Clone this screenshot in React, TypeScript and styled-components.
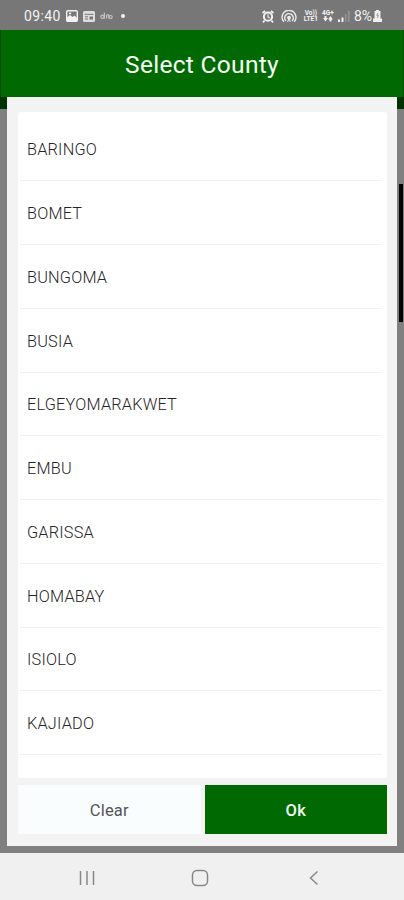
import React from "react";
import styled, { createGlobalStyle } from "styled-components";

const GlobalStyle = createGlobalStyle`
  * { box-sizing: border-box; }
  body { margin: 0; background: #808080; font-family: Roboto, "Liberation Sans", sans-serif; }
`;

const Screen = styled.div`
  display: flex;
  flex-direction: column;
  width: 404px;
  height: 900px;
  overflow: hidden;
  position: relative;
  background: #808080;
`;

const StatusBar = styled.div`
  display: flex;
  flex: none;
  align-items: center;
  justify-content: space-between;
  height: 30px;
  padding: 2px 22px 0 24px;
  background: #777777;
  color: #f2f2f2;
  font-size: 14px;
`;

const StatusGroup = styled.div<{ $gap: number }>`
  display: flex;
  align-items: center;
  gap: ${(p) => p.$gap}px;
  svg { display: block; flex: none; }
`;

const Clock = styled.span`
  letter-spacing: 0.35px;
`;

const Network = styled.span<{ $width: number }>`
  display: flex;
  flex-direction: column;
  align-items: center;
  width: ${(p) => p.$width}px;
  font-size: 6.5px;
  line-height: 6.5px;
  font-weight: 700;
  white-space: nowrap;
`;

const Header = styled.header`
  display: flex;
  flex: none;
  align-items: center;
  justify-content: center;
  height: 67px;
  padding-top: 1px;
  border-left: 1px solid #004f00;
  border-right: 1px solid #004f00;
  background: #016901;
  color: #f6fff6;
  font-size: 24.5px;
  letter-spacing: 0.3px;
`;

const Backdrop = styled.main`
  display: flex;
  flex: 1;
  min-height: 0;
  padding: 0 7px 7px;
  background: linear-gradient(#003300 0 12px, #808080 12px);
`;

const ScrollThumb = styled.div`
  position: absolute;
  top: 184px;
  right: 1px;
  width: 4px;
  height: 138px;
  background: #050505;
`;

const Dialog = styled.section`
  display: flex;
  flex: 1;
  flex-direction: column;
  gap: 7px;
  padding: 15px 10px 12px 11px;
  background: #f3f3f3;
`;

const List = styled.ul`
  flex: 1;
  min-height: 0;
  margin: 0;
  padding: 5.5px 5px 0 2px;
  overflow: hidden;
  list-style: none;
  border-radius: 3px;
  background: #ffffff;
`;

const Item = styled.li`
  display: flex;
  align-items: center;
  height: 63.75px;
  padding: 2px 0 0 7px;
  border-bottom: 1px solid #f0f0f0;
  color: #262626;
  font-size: 16.3px;
  font-weight: 300;
  letter-spacing: 0.2px;
`;

const Actions = styled.div`
  display: grid;
  grid-template-columns: 1fr 1fr;
  gap: 4px;
  flex: none;
  height: 49px;
`;

const Button = styled.button<{ $primary?: boolean }>`
  border: 0;
  padding: 1px 0 0;
  background: ${(p) => (p.$primary ? "#016901" : "#fafdfe")};
  color: ${(p) => (p.$primary ? "#f0fbf0" : "#555555")};
  font: ${(p) => (p.$primary ? 500 : 400)} 16.5px Roboto, sans-serif;
  letter-spacing: 0.15px;
`;

const NavBar = styled.nav`
  display: grid;
  grid-template-columns: 113px 113px 114px;
  justify-items: center;
  align-items: center;
  flex: none;
  height: 47px;
  padding: 3px 0 0 30.5px;
  background: #f0f0f0;
  svg { display: block; fill: none; stroke: #888888; stroke-width: 1.5; }
`;

const counties = [
  "BARINGO", "BOMET", "BUNGOMA", "BUSIA", "ELGEYOMARAKWET",
  "EMBU", "GARISSA", "HOMABAY", "ISIOLO", "KAJIADO",
];

const ImageIcon = () => (
  <svg width="12" height="12" viewBox="0 0 12 12">
    <rect x=".7" y=".7" width="10.6" height="10.6" rx="1" fill="none" stroke="#f2f2f2" strokeWidth="1.4" />
    <path d="M1 10V7.5L4 5l2.5 2L8.5 5.5 11 8v3H1z" fill="#f2f2f2" />
    <rect x="3" y="2.6" width="2.2" height="1.6" fill="#f2f2f2" />
  </svg>
);

const CardIcon = () => (
  <svg width="12" height="11" viewBox="0 0 12 11">
    <rect width="12" height="11" rx="1.5" fill="#dedede" />
    <path d="M1.5 3.3h9M2 5.8h3M2 8h3" stroke="#777" strokeWidth="1" />
    <rect x="6.5" y="5.5" width="3.5" height="3" fill="#777" />
  </svg>
);

const WaveIcon = () => (
  <svg width="13" height="8" viewBox="0 0 13 8" fill="none" stroke="#c2c2c2" strokeWidth="1.2">
    <circle cx="2.4" cy="4.8" r="1.6" />
    <path d="M4.4 .5v6.2M6.6 6.6V3.4q1.4-1.8 2.2 0v3.2" />
    <circle cx="10.7" cy="5" r="1.5" />
  </svg>
);

const AlarmIcon = () => (
  <svg width="12" height="13" viewBox="0 0 12 13">
    <path d="m.5 3 2.6-2M11.5 3 8.9 1M2.6 10.5 1 12.3M9.4 10.5l1.6 1.8" stroke="#f2f2f2" strokeWidth="1.8" />
    <circle cx="6" cy="6.7" r="4.1" fill="#777" stroke="#f2f2f2" strokeWidth="2" />
    <path d="M6 4.2v2.9l1.8.8" fill="none" stroke="#f2f2f2" strokeWidth="1.1" />
  </svg>
);

const HotspotIcon = () => (
  <svg width="16" height="13" viewBox="0 0 16 13" fill="none" stroke="#ececec" strokeWidth="1.4">
    <path d="M2.7 11.8a7 7 0 1 1 10.6 0M5 11a4.3 4.3 0 1 1 6 0" />
    <circle cx="8" cy="7.7" r="1.2" fill="#ececec" />
    <path d="m8 8-1.3 4M8 8l1.3 4" strokeWidth="1" />
  </svg>
);

const DataArrows = () => (
  <svg width="10" height="6" viewBox="0 0 10 6" fill="#f0f0f0">
    <path d="M0 2h1.5V0h2v2H5L2.5 5.5zM5 3.5 7.5 0 10 3.5H8.5v2h-2v-2z" />
  </svg>
);

const SignalIcon = () => (
  <svg width="12" height="12" viewBox="0 0 12 12">
    <path d="M0 12V9.5h2V12zM3.5 12V7.5h2V12z" fill="#f0f0f0" />
    <path d="M7 12V4h1.5v8zM10 12V1h1.6v11z" fill="#949494" />
  </svg>
);

const BatteryIcon = () => (
  <svg width="9" height="12" viewBox="0 0 9 12">
    <path d="M3 0h3v1h1.5v7.5H9V12H0V8.5h1.5V1H3z" fill="#eeeeee" />
    <path d="M5 3 3.8 5.3h1.7L4.3 8" fill="none" stroke="#888" strokeWidth=".8" />
  </svg>
);

const Dot = styled.span`
  width: 4px;
  height: 4px;
  margin-left: 3px;
  border-radius: 50%;
  background: #f2f2f2;
`;

export default function App() {
  return (
    <>
      <GlobalStyle />
      <Screen>
        <StatusBar>
          <StatusGroup $gap={5}>
            <Clock>09:40</Clock>
            <ImageIcon />
            <CardIcon />
            <WaveIcon />
            <Dot />
          </StatusGroup>
          <StatusGroup $gap={4}>
            <StatusGroup $gap={7}>
              <AlarmIcon />
              <HotspotIcon />
              <Network $width={14}><span>Vo))</span><span>LTE1</span></Network>
            </StatusGroup>
            <Network $width={12}><span>4G+</span><DataArrows /></Network>
            <SignalIcon />
            <StatusGroup $gap={1}>
              <span>8%</span>
              <BatteryIcon />
            </StatusGroup>
          </StatusGroup>
        </StatusBar>
        <Header>Select County</Header>
        <Backdrop>
          <Dialog>
            <List>
              {counties.map((name) => <Item key={name}>{name}</Item>)}
            </List>
            <Actions>
              <Button>Clear</Button>
              <Button $primary>Ok</Button>
            </Actions>
          </Dialog>
        </Backdrop>
        <ScrollThumb />
        <NavBar>
          <svg width="18" height="16" viewBox="0 0 18 16"><path d="M2.5 1v14M9 1v14M15.5 1v14" /></svg>
          <svg width="18" height="18" viewBox="0 0 18 18"><rect x="1.5" y="1.5" width="15" height="15" rx="4.5" /></svg>
          <svg width="10" height="16" viewBox="0 0 10 16"><path d="M8.5 1.5 1.5 8l7 6.5" /></svg>
        </NavBar>
      </Screen>
    </>
  );
}
